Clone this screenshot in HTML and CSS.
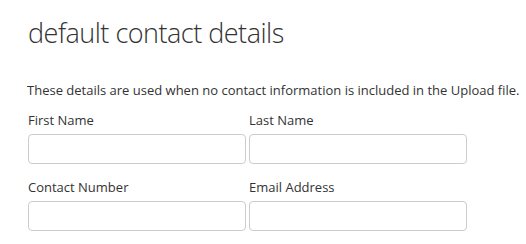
FILE: index.html
```html
<!DOCTYPE html>
<html>
<head>
<meta charset="utf-8">
<link rel="stylesheet" href="styles.css">
</head>
<body>
<div class="page">
  <h1 class="title">default contact details</h1>
  <p class="intro">These details are used when no contact information is included in the Upload file.</p>
  <div class="form">
    <div class="field">
      <label class="label">First Name</label>
      <input class="input" type="text">
    </div>
    <div class="field">
      <label class="label">Last Name</label>
      <input class="input" type="text">
    </div>
    <div class="field">
      <label class="label">Contact Number</label>
      <input class="input" type="text">
    </div>
    <div class="field">
      <label class="label">Email Address</label>
      <input class="input" type="text">
    </div>
  </div>
</div>
</body>
</html>
```
FILE: styles.css
```css
html, body {
  margin: 0;
  padding: 0;
  background: #fff;
}
.page {
  padding: 13px 0 0 28px;
  font-family: "Open Sans", "Noto Sans", sans-serif;
  color: #333;
}
.title {
  margin: 0;
  font-size: 27px;
  font-weight: 300;
  line-height: 40px;
  color: #333;
  letter-spacing: -0.5px;
}
.intro {
  margin: 28px 0 0 -1px;
  font-size: 13px;
  line-height: 18px;
  white-space: nowrap;
}
.form {
  display: grid;
  grid-template-columns: 218px 218px;
  column-gap: 3px;
  row-gap: 14px;
  margin-top: 12px;
}
.field {
  display: flex;
  flex-direction: column;
}
.label {
  font-size: 13px;
  line-height: 18px;
  margin-bottom: 5px;
}
.input {
  box-sizing: border-box;
  width: 218px;
  height: 30px;
  margin: 0;
  border: 1px solid #ccc;
  border-radius: 4px;
  background: #fff;
  outline: none;
}
```
